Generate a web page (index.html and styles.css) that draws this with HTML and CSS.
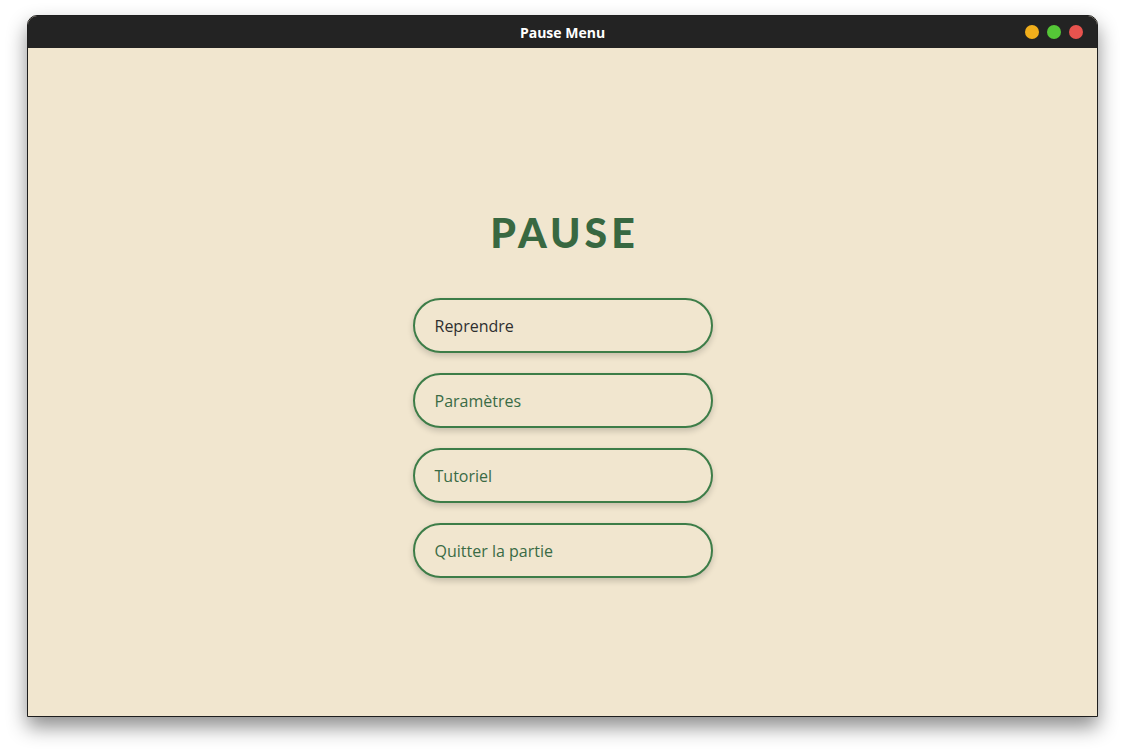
FILE: index.html
```html
<!DOCTYPE html>
<html lang="fr">
<head>
<meta charset="utf-8">
<title>Pause Menu</title>
<link rel="stylesheet" href="styles.css">
</head>
<body>
<div class="window">
  <div class="titlebar">
    <span class="title">Pause Menu</span>
    <div class="lights">
      <span class="light orange"></span>
      <span class="light green"></span>
      <span class="light red"></span>
    </div>
  </div>
  <main class="content">
    <h1 class="heading">PAUSE</h1>
    <nav class="menu">
      <button class="btn btn-active">Reprendre</button>
      <button class="btn">Paramètres</button>
      <button class="btn">Tutoriel</button>
      <button class="btn">Quitter la partie</button>
    </nav>
  </main>
</div>
</body>
</html>
```

FILE: styles.css
```css
html, body {
  margin: 0;
  padding: 0;
  background: #ffffff;
}
html {
  height: 100%;
}
body {
  min-height: 100%;
  box-sizing: border-box;
  padding: 15px 27px 0 27px;
  font-family: "Open Sans", "Noto Sans", sans-serif;
}
.window {
  width: 1071px;
  height: 702px;
  box-sizing: border-box;
  border-radius: 10px 10px 0 0;
  background: #f1e6cf;
  border: 1px solid #1e1e1e;
  box-shadow: 0 10px 20px rgba(0,0,0,0.45);
  display: flex;
  flex-direction: column;
  overflow: hidden;
}
.titlebar {
  height: 32px;
  background: #232323;
  display: flex;
  align-items: center;
  justify-content: center;
  position: relative;
  flex: none;
}
.title {
  color: #ffffff;
  font-weight: 700;
  font-size: 14px;
  font-family: "Open Sans", "Noto Sans", sans-serif;
}
.lights {
  position: absolute;
  right: 14px;
  top: 9px;
  display: flex;
  gap: 8px;
}
.light {
  width: 14px;
  height: 14px;
  border-radius: 50%;
  display: block;
}
.orange { background: #f1ae1b; }
.green { background: #55c637; }
.red { background: #e8534e; }
.content {
  flex: 1;
  display: flex;
  flex-direction: column;
  align-items: center;
  padding-top: 157px;
}
.heading {
  margin: 0;
  font-family: "Lato", sans-serif;
  font-weight: 900;
  font-size: 41px;
  line-height: 56px;
  letter-spacing: 4px;
  padding-left: 4px;
  color: #386841;
}
.menu {
  margin-top: 37px;
  display: flex;
  flex-direction: column;
  gap: 20px;
}
.btn {
  width: 300px;
  height: 55px;
  box-sizing: border-box;
  border: 2px solid #3d7d48;
  border-radius: 28px;
  background: #f1e6cf;
  text-align: left;
  padding: 0 0 0 20px;
  font-family: "Open Sans", "Noto Sans", sans-serif;
  font-size: 16px;
  color: #3a6b45;
  box-shadow: 0 3px 6px rgba(0,0,0,0.18);
  cursor: pointer;
}
.btn-active {
  color: #2f2f2f;
}
```
